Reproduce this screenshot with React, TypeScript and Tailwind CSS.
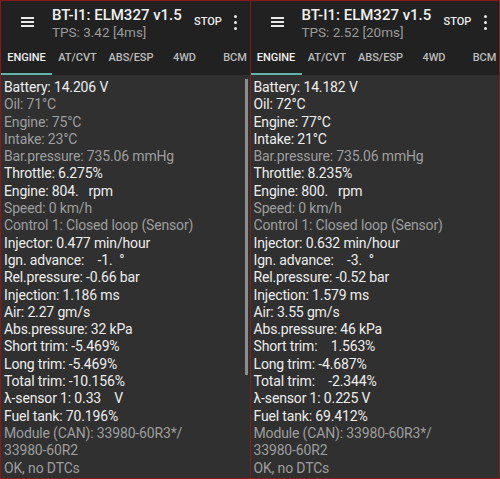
import React from 'react';

type Line = { text: string; on: boolean };

const TABS: { label: string; w: string }[] = [
  { label: 'ENGINE', w: 'w-[51px]' },
  { label: 'AT/CVT', w: 'w-[51px]' },
  { label: 'ABS/ESP', w: 'w-[56px]' },
  { label: '4WD', w: 'w-[51px]' },
  { label: 'BCM', w: 'w-[50px]' },
];

const LEFT: Line[] = [
  { text: 'Battery: 14.206 V', on: true },
  { text: 'Oil: 71°C', on: false },
  { text: 'Engine: 75°C', on: false },
  { text: 'Intake: 23°C', on: false },
  { text: 'Bar.pressure: 735.06 mmHg', on: false },
  { text: 'Throttle: 6.275%', on: true },
  { text: 'Engine: 804.   rpm', on: true },
  { text: 'Speed: 0 km/h', on: false },
  { text: 'Control 1: Closed loop (Sensor)', on: false },
  { text: 'Injector: 0.477 min/hour', on: true },
  { text: 'Ign. advance:    -1.  °', on: true },
  { text: 'Rel.pressure: -0.66 bar', on: true },
  { text: 'Injection: 1.186 ms', on: true },
  { text: 'Air: 2.27 gm/s', on: true },
  { text: 'Abs.pressure: 32 kPa', on: true },
  { text: 'Short trim: -5.469%', on: true },
  { text: 'Long trim: -5.469%', on: true },
  { text: 'Total trim: -10.156%', on: true },
  { text: 'λ-sensor 1: 0.33    V', on: true },
  { text: 'Fuel tank: 70.196%', on: true },
  { text: 'Module (CAN): 33980-60R3*/', on: false },
  { text: '33980-60R2', on: false },
  { text: 'OK, no DTCs', on: false },
];

const RIGHT: Line[] = [
  { text: 'Battery: 14.182 V', on: true },
  { text: 'Oil: 72°C', on: true },
  { text: 'Engine: 77°C', on: true },
  { text: 'Intake: 21°C', on: true },
  { text: 'Bar.pressure: 735.06 mmHg', on: false },
  { text: 'Throttle: 8.235%', on: true },
  { text: 'Engine: 800.   rpm', on: true },
  { text: 'Speed: 0 km/h', on: false },
  { text: 'Control 1: Closed loop (Sensor)', on: false },
  { text: 'Injector: 0.632 min/hour', on: true },
  { text: 'Ign. advance:    -3.  °', on: true },
  { text: 'Rel.pressure: -0.52 bar', on: true },
  { text: 'Injection: 1.579 ms', on: true },
  { text: 'Air: 3.55 gm/s', on: true },
  { text: 'Abs.pressure: 46 kPa', on: true },
  { text: 'Short trim:    1.563%', on: true },
  { text: 'Long trim: -4.687%', on: true },
  { text: 'Total trim:    -2.344%', on: true },
  { text: 'λ-sensor 1: 0.225 V', on: true },
  { text: 'Fuel tank: 69.412%', on: true },
  { text: 'Module (CAN): 33980-60R3*/', on: false },
  { text: '33980-60R2', on: false },
  { text: 'OK, no DTCs', on: false },
];

function Panel({ tps, lines, scrollbar }: { tps: string; lines: Line[]; scrollbar: boolean }) {
  return (
    <div className="relative flex-1 flex flex-col overflow-hidden bg-[#303030]">
      {/* toolbar + tabs */}
      <div className="bg-[#212121]">
        <div className="flex items-center h-[42px]">
          <div className="w-[51px] shrink-0 flex justify-center pl-[2px]">
            <div className="flex flex-col gap-[2px]">
              <div className="w-[13px] h-[2px] bg-[#e8e8e8]" />
              <div className="w-[13px] h-[2px] bg-[#e8e8e8]" />
              <div className="w-[13px] h-[2px] bg-[#e8e8e8]" />
            </div>
          </div>
          <div className="w-[142px] shrink-0 flex flex-col pt-[1px] whitespace-nowrap">
            <div className="text-[15px] leading-[18px] font-medium text-[#f0f0f0]">BT-I1: ELM327 v1.5</div>
            <div className="text-[13.5px] leading-[16px] text-[#9a9a9a]">{tps}</div>
          </div>
          <div className="shrink-0 w-[24px] text-[11px] font-medium text-[#ececec]">STOP</div>
          <div className="flex-1 flex justify-center pl-[4px]">
            <div className="flex flex-col gap-[3px]">
              <div className="w-[3px] h-[3px] rounded-full bg-[#e8e8e8]" />
              <div className="w-[3px] h-[3px] rounded-full bg-[#e8e8e8]" />
              <div className="w-[3px] h-[3px] rounded-full bg-[#e8e8e8]" />
            </div>
          </div>
        </div>
        <div className="flex h-[32px] whitespace-nowrap">
          {TABS.map((t, i) => (
            <div
              key={t.label}
              className={`${t.w} shrink-0 flex items-center justify-center text-[11px] font-medium pt-[1px] ${
                i === 0 ? 'text-[#f0f0f0] border-b-2 border-[#5fb3a9]' : 'text-[#bcbcbc] border-b-2 border-transparent'
              }`}
            >
              {t.label}
            </div>
          ))}
        </div>
      </div>

      {/* values */}
      <div className="flex flex-col pt-[4px] pl-[3px] whitespace-pre text-[14px] leading-[17.3px] tracking-[-0.15px]">
        {lines.map((l, i) => (
          <div key={i} className={l.on ? 'text-[#ededed]' : 'text-[#9e9e9e]'}>
            {l.text}
          </div>
        ))}
      </div>

      {scrollbar && <div className="absolute right-[2px] top-[78px] w-[3px] h-[296px] bg-[#8c8c8c]" />}
    </div>
  );
}

export default function App() {
  return (
    <div
      className="w-[500px] h-[479px] flex gap-px p-px bg-[#8a1a1a]"
      style={{ fontFamily: 'Roboto, "Noto Sans", sans-serif' }}
    >
      <Panel tps="TPS: 3.42 [4ms]" lines={LEFT} scrollbar />
      <Panel tps="TPS: 2.52 [20ms]" lines={RIGHT} scrollbar={false} />
    </div>
  );
}
